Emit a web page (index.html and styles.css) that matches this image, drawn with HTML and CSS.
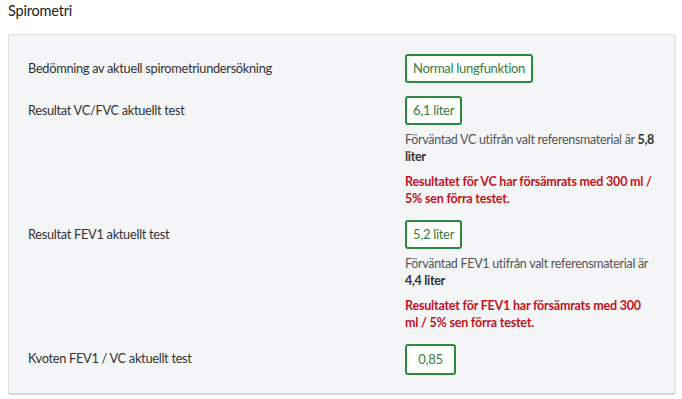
FILE: index.html
```html
<!DOCTYPE html>
<html lang="sv">
<head>
<meta charset="utf-8">
<title>Spirometri</title>
<link rel="stylesheet" href="styles.css">
</head>
<body>
<h2 class="section-title">Spirometri</h2>
<div class="panel">
  <div class="row">
    <div class="label">Bedömning av aktuell spirometriundersökning</div>
    <div class="value">
      <span class="badge">Normal lungfunktion</span>
    </div>
  </div>
  <div class="row">
    <div class="label">Resultat VC/FVC aktuellt test</div>
    <div class="value">
      <span class="badge">6,1 liter</span>
      <p class="note">Förväntad VC utifrån valt referensmaterial är <b>5,8 liter</b></p>
      <p class="warn">Resultatet för VC har försämrats med 300 ml / 5% sen förra testet.</p>
    </div>
  </div>
  <div class="row">
    <div class="label">Resultat FEV1 aktuellt test</div>
    <div class="value">
      <span class="badge">5,2 liter</span>
      <p class="note">Förväntad FEV1 utifrån valt referensmaterial är <b>4,4 liter</b></p>
      <p class="warn">Resultatet för FEV1 har försämrats med 300 ml / 5% sen förra testet.</p>
    </div>
  </div>
  <div class="row">
    <div class="label">Kvoten FEV1 / VC aktuellt test</div>
    <div class="value">
      <span class="badge badge-wide">0,85</span>
    </div>
  </div>
</div>
</body>
</html>
```
FILE: styles.css
```css
* { box-sizing: border-box; }
body {
  margin: 0;
  padding: 0 8px;
  font-family: "Lato", "Liberation Sans", sans-serif;
  font-size: 12.5px;
  letter-spacing: -0.3px;
  color: #333;
  background: #fff;
}
.section-title {
  margin: 0;
  padding-top: 2px;
  height: 34px;
  font-size: 14.5px;
  font-weight: 400;
  letter-spacing: -0.2px;
  color: #222;
  line-height: 18px;
}
.panel {
  width: 668px;
  background: #f4f5f7;
  border: 1px solid #dcdee2;
  border-bottom: 2px solid #d6d8dc;
  border-radius: 3px;
  padding: 19px 19px 18px;
  display: flex;
  flex-direction: column;
  gap: 13px;
}
.row {
  display: grid;
  grid-template-columns: 377px 251px;
  align-items: start;
}
.label {
  line-height: 29px;
  font-size: 12.8px;
  color: #333;
}
.value {
  display: flex;
  flex-direction: column;
  align-items: flex-start;
}
.badge {
  display: inline-block;
  height: 29px;
  line-height: 25px;
  padding: 0 6px;
  border: 2px solid #2b8a3e;
  border-radius: 3px;
  background: #fff;
  font-size: 13px;
  color: #357d42;
}
.badge-wide {
  min-width: 51px;
  height: 31px;
  line-height: 27px;
  text-align: center;
}
.note {
  margin: 7px 0 0;
  line-height: 16.5px;
  color: #555;
}
.note b { color: #333; }
.warn {
  margin: 8px 0 0;
  line-height: 17px;
  letter-spacing: -0.2px;
  color: #c4121e;
  font-weight: 700;
}
```
